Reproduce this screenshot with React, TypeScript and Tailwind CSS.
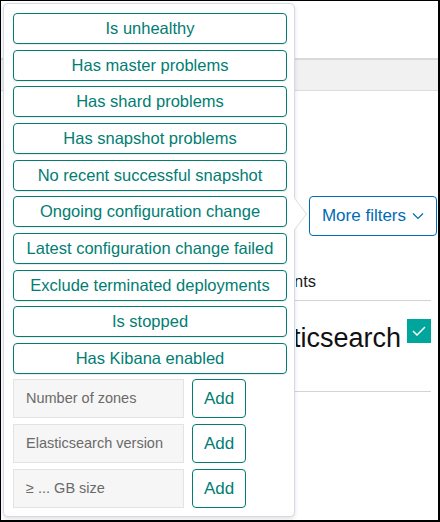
import React from "react";

const filters = [
  "Is unhealthy",
  "Has master problems",
  "Has shard problems",
  "Has snapshot problems",
  "No recent successful snapshot",
  "Ongoing configuration change",
  "Latest configuration change failed",
  "Exclude terminated deployments",
  "Is stopped",
  "Has Kibana enabled",
];

const inputs = ["Number of zones", "Elasticsearch version", "≥ ... GB size"];

export default function App() {
  return (
    <div
      className="relative w-[440px] h-[522px] overflow-hidden bg-white border-black border-t border-l border-r-2 border-b-2"
      style={{ fontFamily: '"Liberation Sans", Arial, sans-serif' }}
    >
      {/* background page */}
      <div className="flex flex-col">
        <div className="h-[57px]" />
        <div className="h-[33px] bg-[#f1f1f1] border-t-2 border-[#d9d9d9] border-b border-b-[#dcdcdc]" />
        <div className="h-[105px]" />
        <div className="flex justify-end pr-[1px]">
          <div className="h-[40px] w-[128px] border border-[#006bb4] rounded-[4px] flex items-center justify-center gap-[6px] text-[#006bb4] text-[17px]">
            <span>More filters</span>
            <svg width="12" height="8" viewBox="0 0 12 8" fill="none" stroke="#006bb4" strokeWidth="1.2">
              <path d="M1 1.5 L6 6.5 L11 1.5" />
            </svg>
          </div>
        </div>
        <div className="h-[35px]" />
        <div className="ml-[295px] mr-[122px] flex justify-end overflow-hidden whitespace-nowrap text-[16.5px] text-[#1a1c21] leading-[20px]">
          <span>Deployments</span>
        </div>
        <div className="h-[9px]" />
        <div className="ml-[160px] mr-[7px] border-t border-[#d3d3d3]" />
        <div className="h-[18px]" />
        <div className="flex items-start justify-end pr-[7px] gap-[6px]">
          <div className="ml-[295px] flex-1 flex justify-end overflow-hidden whitespace-nowrap mt-[4px]">
            <span className="text-[27px] text-[#111] leading-[30px]">Elasticsearch</span>
          </div>
          <div className="w-[24px] h-[24px] shrink-0 bg-[#00a69b] flex items-center justify-center">
            <svg width="14" height="10" viewBox="0 0 14 10" fill="none" stroke="white" strokeWidth="1.5">
              <path d="M1 5 L5 9 L13 1" />
            </svg>
          </div>
        </div>
        <div className="h-[38px]" />
        <div className="ml-[160px] mr-[7px] border-t border-[#d3d3d3]" />
      </div>

      {/* popover */}
      <div className="absolute left-[2px] top-[2px] w-[292px] h-[514px] bg-white border border-[#d3dae6] rounded-[5px] shadow-[0_2px_4px_rgba(0,0,0,0.12)]">
        {/* arrow */}
        <div className="absolute right-[-13px] top-[193px] w-0 h-0 border-y-[17px] border-y-transparent border-l-[13px] border-l-[#dcdcdc]" />
        <div className="absolute right-[-12px] top-[193px] w-0 h-0 border-y-[17px] border-y-transparent border-l-[13px] border-l-white" />

        <div className="flex flex-col pl-[9px] pr-[7px] pt-[9px] gap-[5.67px]">
          {filters.map((f) => (
            <div
              key={f}
              className="h-[31px] border border-[#017d73] rounded-[4px] flex items-center justify-center text-[#017d73] text-[16.5px] shadow-[0_1px_1px_rgba(0,0,0,0.08)]"
            >
              {f}
            </div>
          ))}
        </div>

        <div className="flex flex-col pl-[9px] pt-[5px] gap-[6px]">
          {inputs.map((p) => (
            <div key={p} className="flex gap-[8px]">
              <div className="w-[171px] h-[39px] bg-[#f6f6f6] border border-[#e3e3e3] flex items-center pl-[12px] text-[14.5px] text-[#6a6a6a]">
                {p}
              </div>
              <div className="w-[54px] h-[39px] border border-[#017d73] rounded-[4px] flex items-center justify-center text-[#017d73] text-[17px]">
                Add
              </div>
            </div>
          ))}
        </div>
      </div>
    </div>
  );
}
